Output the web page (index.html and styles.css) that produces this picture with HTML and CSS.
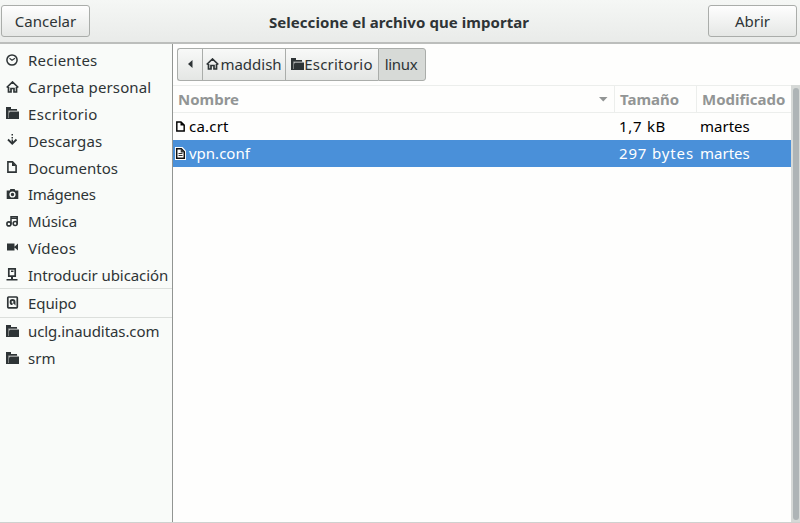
FILE: index.html
```html
<!DOCTYPE html>
<html lang="es">
<head>
<meta charset="utf-8">
<title>Seleccione el archivo que importar</title>
<link rel="stylesheet" href="styles.css">
</head>
<body>
<svg class="defs" width="0" height="0">
  <symbol id="folder" viewBox="0 0 13 12"><path d="M0 0h5v2h6v2H3v8H0z"/><path d="M3.500 4.500H13V12H1V2.500h1V11z"/><path d="M2.500 11V3.800h9" fill="none" stroke="#9da09f" stroke-width=".7"/></symbol>
  <symbol id="home" viewBox="0 0 13 12"><path d="M.7 6.500L6.500 1l5.800 5.500M2.500 6v5H5V7.500h3V11h2.500V6" fill="none" stroke="currentColor" stroke-width="1.700"/></symbol>
  <symbol id="doc" viewBox="0 0 10 12"><path d="M.9.9h4.600L9.100 4.500v6.600H.9z" fill="none" stroke="currentColor" stroke-width="1.600"/><path d="M5 1v4h4z"/></symbol>
</svg>
<div class="dialog">
  <header class="bar">
    <button class="btn">Cancelar</button>
    <h1 class="title">Seleccione el archivo que importar</h1>
    <button class="btn">Abrir</button>
  </header>
  <div class="body">
    <nav class="side">
      <div class="place"><svg width="13" height="12" viewBox="0 0 13 12"><circle cx="6" cy="6" r="5.100" fill="none" stroke="currentColor" stroke-width="1.500"/><path d="M3.500 4.200L6 6.200l3-2" fill="none" stroke="currentColor" stroke-width="1.100"/></svg><span class="wide">Recientes</span></div>
      <div class="place"><svg width="13" height="12"><use href="#home"/></svg><span class="roomy">Carpeta personal</span></div>
      <div class="place"><svg width="13" height="12"><use href="#folder"/></svg><span class="wider">Escritorio</span></div>
      <div class="place"><svg width="13" height="12" viewBox="0 0 13 12"><path d="M5.500 0h1.500v1.600H5.500zM5.500 3h1.500v1.600H5.500zM5.500 5.500h1.500V9H5.500z"/><path d="M2 5.500l4.250 4.200 4.250-4.200" fill="none" stroke="currentColor" stroke-width="1.800"/></svg><span class="roomy">Descargas</span></div>
      <div class="place"><svg class="doc" width="10" height="12"><use href="#doc"/></svg><span>Documentos</span></div>
      <div class="place"><svg width="13" height="12" viewBox="0 0 13 12"><path d="M.7 2.500h3L4.400 1h4.200l.7 1.500h3V11H.7z"/><circle cx="6.500" cy="6.500" r="2.400" fill="none" stroke="#f9fbf9" stroke-width="1.400"/></svg><span class="narrow">Imágenes</span></div>
      <div class="place"><svg width="13" height="12" viewBox="0 0 13 12"><path d="M5 9.500V1.700h6.200v7" fill="none" stroke="currentColor" stroke-width="1.500"/><path d="M5 2.500h6.500V4H5z"/><circle cx="2.900" cy="8.900" r="2" fill="none" stroke="currentColor" stroke-width="1.600"/><circle cx="9.200" cy="8.500" r="2" fill="none" stroke="currentColor" stroke-width="1.600"/></svg><span class="snug">Música</span></div>
      <div class="place"><svg width="13" height="12" viewBox="0 0 13 12"><path d="M1 2.500h7.500v7H1zM8.500 5.800L12 2.500v7L8.500 6.500z"/></svg><span class="wide">Vídeos</span></div>
      <div class="place"><svg width="13" height="13" viewBox="0 0 13 13"><path d="M2.800.9h6.400v7.200H2.800z" fill="none" stroke="currentColor" stroke-width="1.700"/><path d="M5 2.500h2.500V4H5zM5 8h2v4H5zM.5 11h11v1.600H.5z"/></svg><span class="snug">Introducir ubicación</span></div>
      <div class="place split"><svg width="13" height="13" viewBox="0 0 13 13"><rect x="1.800" y="1" width="9.500" height="10.800" rx=".8" fill="none" stroke="currentColor" stroke-width="1.700"/><path d="M6.500 3a3 3 0 1 0 .3 6L6 7.500h1.500l2 2V6A3 3 0 0 0 6.500 3z"/><circle cx="6.500" cy="6" r="1" fill="#f9fbf9"/></svg><span class="snug">Equipo</span></div>
      <div class="place split"><svg width="13" height="12"><use href="#folder"/></svg><span class="snug">uclg.inauditas.com</span></div>
      <div class="place"><svg width="13" height="12"><use href="#folder"/></svg><span>srm</span></div>
    </nav>
    <main class="main">
      <div class="path">
        <button class="crumb back"><svg width="5" height="8" viewBox="0 0 5 8"><path d="M4.500 0v8L0 4z"/></svg></button>
        <button class="crumb c1"><svg width="13" height="12"><use href="#home"/></svg><span>maddish</span></button>
        <button class="crumb c2"><svg width="13" height="12"><use href="#folder"/></svg><span class="wide">Escritorio</span></button>
        <button class="crumb c3"><span class="narrow">linux</span></button>
      </div>
      <div class="view">
        <div class="list">
          <div class="row head"><div class="h1">Nombre<svg width="9" height="5" viewBox="0 0 9 5"><path d="M0 0h8.500L4.250 4.500z"/></svg></div><div class="h2">Tamaño</div><div class="h3">Modificado</div></div>
          <div class="row"><div class="name"><svg width="9" height="11"><use href="#doc"/></svg><span class="wide">ca.crt</span></div><div class="size s1">1,7 kB</div><div class="date">martes</div></div>
          <div class="row on"><div class="name"><svg width="11" height="13" viewBox="0 0 11 13"><path d="M0 0h7.500L11 3.800V13H0z" fill="#fff"/><path d="M1.700 1.700h4.600l3 3v6.600H1.700z" fill="#fff" stroke="#111" stroke-width="1.500"/><path d="M5.700 2v3.500H9zM3.500 6h4v1h-4zM3.500 8h4v1h-4z" fill="#333"/></svg><span>vpn.conf</span></div><div class="size s2">297 bytes</div><div class="date">martes</div></div>
        </div>
        <div class="scroll"><div class="thumb"></div></div>
      </div>
    </main>
  </div>
</div>
</body>
</html>
```
FILE: styles.css
```css
* { box-sizing: border-box; }
body { margin: 0; font: 15px/20px "Noto Sans", sans-serif; color: #2e3436; }
svg { fill: currentColor; flex: none; display: block; }
.defs { position: absolute; }
.dialog { width: 800px; height: 523px; display: flex; flex-direction: column; background: #fefefd; border-bottom: 1px solid #cfd1cf; overflow: hidden; }
.bar { height: 44px; flex: none; padding: 5px 3px 0 1px; display: flex; justify-content: space-between; background: linear-gradient(#f5f7f5, #e9ebe9); border-bottom: 2px solid #bcbebc; }
.btn { width: 89px; height: 32px; padding: 0 0 1px; font: inherit; color: inherit; border: 1px solid #aaadaa; border-radius: 3px; background: linear-gradient(#fefefe, #e5e7e5); }
.title { margin: 0; font-size: 15px; line-height: 34px; font-weight: 700; letter-spacing: .06px; }
.body { flex: 1; display: flex; min-height: 0; }
.side { width: 173px; flex: none; padding-top: 3px; background: #f9fbf9; border-right: 1px solid #929592; }
.place { height: 26.8px; display: flex; align-items: center; white-space: nowrap; }
.place svg { margin: -1px 9px 0 6px; }
.place .doc { margin: -1px 11px 0 7px; }
.split { border-top: 1px solid #dcdfdc; height: 28.4px; }
.narrow { letter-spacing: -.33px; }
.snug { letter-spacing: -.08px; }
.roomy { letter-spacing: .13px; }
.wide { letter-spacing: .2px; }
.wider { letter-spacing: .33px; }
.main { flex: 1; min-width: 0; display: flex; flex-direction: column; }
.path { height: 41px; padding: 4px 0 0 4px; display: flex; flex: none; }
.crumb { height: 33px; padding: 0; display: flex; align-items: center; justify-content: center; font: inherit; color: inherit; border: 1px solid #aaadaa; border-right-width: 0; background: linear-gradient(#f8f9f8, #e4e6e4); }
.back { width: 25px; border-radius: 3px 0 0 3px; }
.c1 { width: 83px; }
.c2 { width: 93px; }
.c3 { width: 48px; border-right-width: 1px; border-radius: 0 3px 3px 0; background: #d7dad7; }
.crumb svg { margin-top: -1px; }
.crumb span { margin: -1px 0 0 1px; }
.c2 span { margin-left: 0; }
.c3 span { margin-left: -2px; }
.view { flex: 1; display: flex; min-height: 0; }
.list { flex: 1; color: #000; }
.row { display: grid; grid-template-columns: 441px 82px 1fr; height: 27px; line-height: 27px; white-space: nowrap; }
.head { height: 28px; color: #929595; font-weight: 700; border: solid #eceeec; border-width: 1px 0; line-height: 27px; }
.head > div + div { border-left: 1px solid #eceeec; padding-left: 5px; }
.h1 { display: flex; justify-content: space-between; align-items: center; padding: 0 6px 0 5px; }
.on { background: #4a90d9; color: #fff; }
.name { display: flex; align-items: center; padding-left: 3px; }
.name svg { margin-right: 4px; }
.on .name { padding-left: 2px; }
.on .name svg { margin-right: 3px; }
.size { padding-left: 5px; }
.s1 { letter-spacing: .7px; }
.s2 { letter-spacing: .85px; }
.date { padding-left: 4px; }
.scroll { width: 9px; flex: none; background: #d6d9d7; padding: 3px 1px 2px 2px; display: flex; }
.thumb { flex: 1; border-radius: 3px; background: #aeb4b6; }
```
